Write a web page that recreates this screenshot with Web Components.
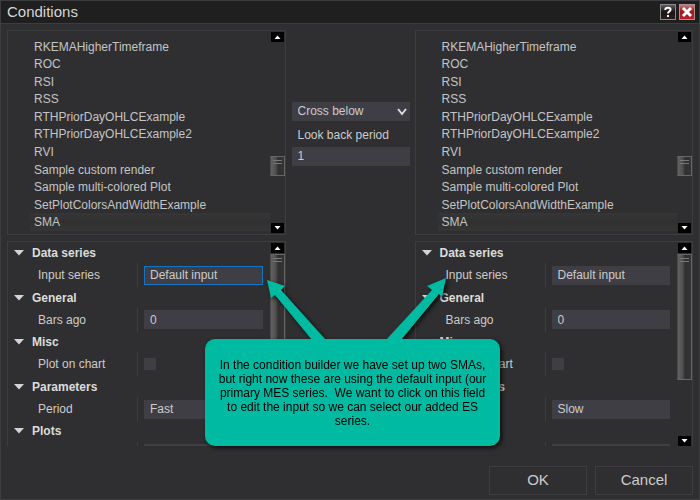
<!DOCTYPE html>
<html lang="en">
<head>
<meta charset="utf-8">
<title>Conditions</title>
<style>
html, body { height: 100%; }
body {
  margin: 0;
  background: #2f2f31;
  color: #ccc;
  font: 12px/16px "Liberation Sans", Arial, sans-serif;
  --bg: #2f2f31;
  --line: #3d3d40;
  --field: #3f3e45;
  --accent: #00baa1;
}
</style>
</head>
<body>
<conditions-dialog></conditions-dialog>

<template id="t-dialog">
  <style>
    :host { display: flex; flex-direction: column; min-height: 100%; box-sizing: border-box; border: 1px solid var(--line); position: relative; overflow: hidden; }
    main { display: grid; grid-template-columns: 1fr 129px 1fr; padding: 6px 6px 0; }
    footer { display: flex; justify-content: flex-end; gap: 8px; padding: 20px 6px 4px; }
    footer button { width: 98px; height: 29px; padding: 0 0 2px; border: 1px solid var(--line); background: var(--bg); color: inherit; font: 15px/20px "Liberation Sans", Arial, sans-serif; }
    .side { display: flex; flex-direction: column; gap: 6px; min-width: 0; }
  </style>
  <title-bar>Conditions</title-bar>
  <main>
    <div class="side"><indicator-list></indicator-list><property-grid period="Fast" focused></property-grid></div>
    <compare-fields></compare-fields>
    <div class="side"><indicator-list></indicator-list><property-grid period="Slow"></property-grid></div>
  </main>
  <footer><button>OK</button><button>Cancel</button></footer>
  <callout-note>In the condition builder we have set up two SMAs,<br>but right now these are using the default input (our<br>primary MES series.&nbsp; We want to click on this field<br>to edit the input so we can select our added ES<br>series.</callout-note>
</template>

<template id="t-title">
  <style>
    :host { display: flex; align-items: center; gap: 3px; height: 22px; padding: 0 4px 0 6px; background: #1f1f1f; border-bottom: 1px solid var(--line); }
    h1 { flex: 1; margin: 0; font: 15px/20px "Liberation Sans", Arial, sans-serif; color: #d6d6d6; }
    button { width: 16px; height: 16px; padding: 0; border: 1px solid #8a8a8a; background: linear-gradient(#5c5c5c, #1d1515 50%, #2a1c1c); display: grid; place-items: center; }
    .close { background: linear-gradient(#b98083, #a5161c 45%, #b3242a); border-color: #b08f90; }
    svg { display: block; }
  </style>
  <h1><slot></slot></h1>
  <button aria-label="Help"><svg width="12" height="12" viewBox="0 0 12 12" fill="none" stroke="#fff" stroke-width="2"><path d="M3.4 4V3.2Q3.6 1.7 6 1.7Q8.6 1.7 8.6 3.6Q8.6 4.8 7.2 5.6Q6 6.2 6 7.6M6 9V11"/></svg></button>
  <button class="close" aria-label="Close"><svg width="12" height="12" viewBox="0 0 12 12" stroke="#fff" stroke-width="3"><path d="M2 2L10 10M10 2L2 10"/></svg></button>
</template>

<template id="t-scroll">
  <style>
    :host { display: flex; flex-direction: column; width: 15px; }
    button { flex: none; width: 13px; height: 10px; margin: 0 1px; padding: 0; border: 0; background: #000; display: grid; place-items: center; }
    svg { display: block; }
    .track { flex: 1; display: grid; padding: 1px 0; grid-template-rows: var(--before, 0fr) var(--thumb, 126px) 1fr; }
    .thumb { grid-row: 2; border: 1px solid #656565; border-left-color: #4a4a4a; background: linear-gradient(90deg, #626262, #505050 35%, #303030 55%, #343434); }
    .thumb::before { content: ""; display: block; height: 2px; margin: 3px 2px 0; border: solid #777; border-width: 1px 0; }
  </style>
  <button aria-label="Scroll up"><svg width="7" height="4"><path d="M0.5 4L3.5 0.5L6.5 4Z" fill="#fff"/></svg></button>
  <div class="track"><div class="thumb"></div></div>
  <button aria-label="Scroll down"><svg width="7" height="4"><path d="M0.5 0L3.5 3.5L6.5 0Z" fill="#fff"/></svg></button>
</template>

<template id="t-list">
  <style>
    :host { display: flex; box-sizing: border-box; height: 205px; border: 1px solid var(--line); padding: 1px 0; }
    ul { flex: 1; display: grid; grid-auto-rows: 1fr; margin: 0; padding: 6px 0 2px 22px; list-style: none; color: #c4c4c4; }
    li { display: flex; align-items: center; padding-left: 4px; white-space: nowrap; min-height: 0; }
    li[aria-selected] { background: linear-gradient(#363636, #303030 50%, #363636); }
    scroll-bar { --before: 113px; --thumb: 20px; }
  </style>
  <ul role="listbox" aria-label="Indicators"></ul>
  <scroll-bar></scroll-bar>
</template>

<template id="t-grid">
  <style>
    :host { display: flex; box-sizing: border-box; height: 205px; border: 1px solid var(--line); border-bottom: 0; padding-top: 1px; }
    .clip { flex: 1; display: flex; align-items: flex-start; overflow: hidden; min-width: 0; }
    .rows { flex: 1; height: 223px; display: grid; grid-auto-rows: 1fr; min-width: 0; }
    section { display: grid; grid-template-rows: 20px 1fr; min-height: 0; }
    h2 { margin: 0; padding-left: 6px; display: flex; align-items: center; gap: 8px; font: bold 12px/16px "Liberation Sans", Arial, sans-serif; color: #dcdcdc; }
    .row { display: grid; grid-template-columns: 130px 1fr; align-items: center; min-height: 0; }
    label { padding-left: 30px; box-sizing: border-box; height: 24px; line-height: 24px; border-right: 1px solid var(--line); }
    input { min-width: 0; box-sizing: border-box; height: 19px; margin: 0 7px 0 6px; padding: 0 5px; border: 1px solid var(--field); border-radius: 0; background: var(--field); color: #ccc; font: 12px/16px "Liberation Sans", Arial, sans-serif; outline: 0; }
    input.focus { border-color: #1474c4; }
    input[type=checkbox] { appearance: none; width: 12px; height: 12px; padding: 0; }
  </style>
  <div class="clip"><div class="rows"></div></div>
  <scroll-bar></scroll-bar>
</template>

<template id="t-compare">
  <style>
    :host { display: flex; flex-direction: column; padding: 72px 5px 0 6px; }
    .pick { display: grid; align-items: center; }
    .pick > * { grid-area: 1 / 1; }
    svg { justify-self: end; margin-right: 3px; pointer-events: none; }
    select, input { width: 100%; box-sizing: border-box; height: 19px; margin: 0; padding: 0 6px; border: 0; border-radius: 0; appearance: none; background: var(--field); color: #ccc; font: 12px/19px "Liberation Sans", Arial, sans-serif; }
    label { padding: 2px 6px 0; line-height: 24px; }
  </style>
  <div class="pick">
    <select aria-label="Comparison"><option>Cross below</option></select>
    <svg width="10" height="8"><path d="M1 1L5 6L9 1" fill="none" stroke="#ddd" stroke-width="2"/></svg>
  </div>
  <label for="look">Look back period</label>
  <input id="look" value="1">
</template>

<template id="t-note">
  <style>
    :host { position: absolute; left: 204px; top: 276px; width: 295px; color: #000; text-align: center; line-height: 14px; filter: drop-shadow(2px 2px 2px rgba(0,0,0,.75)); }
    svg { display: block; width: 295px; height: 63px; margin-bottom: -1px; }
    p { margin: 0; padding: 19px 6px 18px; border-radius: 10px; background: var(--accent); white-space: nowrap; }
  </style>
  <svg viewBox="0 0 295 63" fill="#00baa1"><path d="M62 3L80 9L76 13L121 63H107L70 18L66 21ZM241 1L222 9L227 13L181 63H196L234 17L237 20Z"/></svg>
  <p><slot></slot></p>
</template>

<script>
class Base extends HTMLElement {
  constructor() {
    super();
    this.attachShadow({ mode: "open" }).append(document.getElementById(this.constructor.template).content.cloneNode(true));
  }
}
class ScrollBar extends Base { static template = "t-scroll"; }
class TitleBar extends Base { static template = "t-title"; }
class CompareFields extends Base { static template = "t-compare"; }
class CalloutNote extends Base { static template = "t-note"; }
class ConditionsDialog extends Base { static template = "t-dialog"; }

class IndicatorList extends Base {
  static template = "t-list";
  connectedCallback() {
    const names = ["RKEMAHigherTimeframe", "ROC", "RSI", "RSS", "RTHPriorDayOHLCExample", "RTHPriorDayOHLCExample2", "RVI", "Sample custom render", "Sample multi-colored Plot", "SetPlotColorsAndWidthExample", "SMA"];
    this.shadowRoot.querySelector("ul").innerHTML = names.map(n =>
      `<li role="option"${n === "SMA" ? ' aria-selected="true"' : ""}>${n}</li>`).join("");
  }
}

class PropertyGrid extends Base {
  static template = "t-grid";
  connectedCallback() {
    const groups = [
      ["Data series", "Input series", `value="Default input"${this.hasAttribute("focused") ? ' class="focus"' : ""}`],
      ["General", "Bars ago", 'value="0"'],
      ["Misc", "Plot on chart", 'type="checkbox"'],
      ["Parameters", "Period", `value="${this.getAttribute("period")}"`],
      ["Plots", "", 'aria-label="Plot"']
    ];
    this.shadowRoot.querySelector(".rows").innerHTML = groups.map(([title, name, attrs], i) => `
      <section>
        <h2><svg width="10" height="6"><path d="M0 0H10L5 5.5Z" fill="#d4d4d4"/></svg>${title}</h2>
        <div class="row"><label for="f${i}">${name}</label><input id="f${i}" ${attrs}></div>
      </section>`).join("");
  }
}

customElements.define("scroll-bar", ScrollBar);
customElements.define("title-bar", TitleBar);
customElements.define("compare-fields", CompareFields);
customElements.define("callout-note", CalloutNote);
customElements.define("indicator-list", IndicatorList);
customElements.define("property-grid", PropertyGrid);
customElements.define("conditions-dialog", ConditionsDialog);
</script>
</body>
</html>
